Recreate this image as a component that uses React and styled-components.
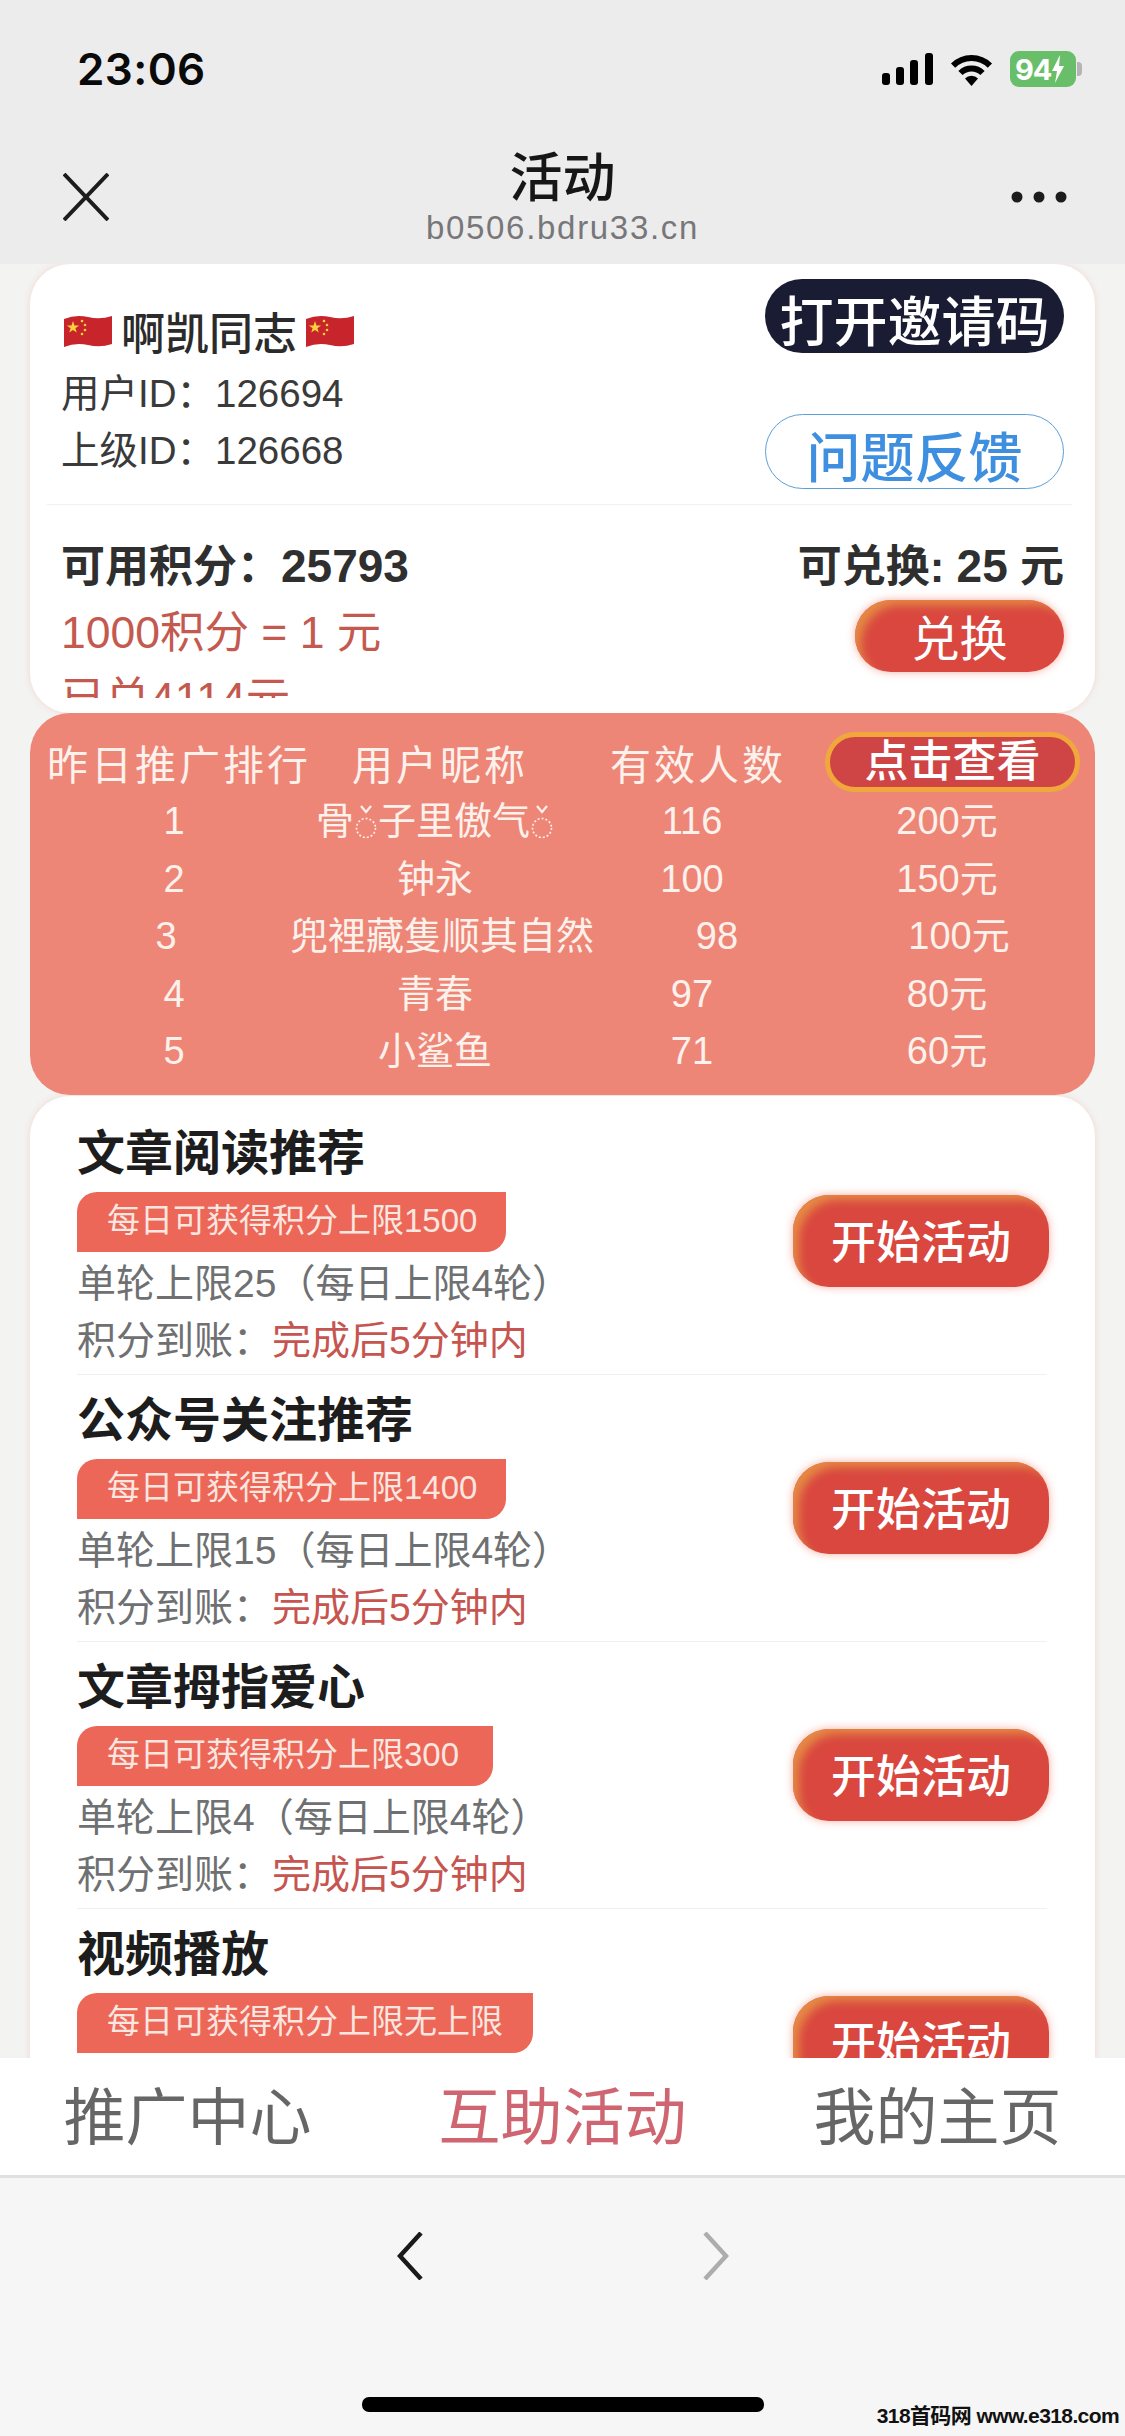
import React from 'react';
import styled, { createGlobalStyle } from 'styled-components';

const GlobalStyle = createGlobalStyle`
  html, body {
    margin: 0;
    padding: 0;
    background: #f3f3f1;
  }
  * {
    box-sizing: border-box;
  }
  body {
    font-family: "Liberation Sans", "Noto Sans CJK SC", sans-serif;
    text-spacing-trim: space-all;
  }
`;

const Page = styled.div`
  position: relative;
  width: 1125px;
  height: 2436px;
  display: flex;
  flex-direction: column;
  overflow: hidden;
  background: #f3f3f1;
`;

const Header = styled.header`
  height: 264px;
  flex-shrink: 0;
  background: #ececec;
`;

const StatusBar = styled.div`
  height: 138px;
  padding: 0 49px 0 77px;
  display: flex;
  align-items: center;
  justify-content: space-between;
`;

const Time = styled.span`
  font-family: Inter, sans-serif;
  font-size: 44px;
  font-weight: 600;
  letter-spacing: 0.4px;
  color: #0a0a0a;
`;

const StatusIcons = styled.div`
  display: flex;
  align-items: center;
  gap: 14px;
`;

const Battery = styled.div`
  position: relative;
  width: 66px;
  height: 36px;
  border-radius: 9px;
  background: #69bf69;
  display: flex;
  align-items: center;
  padding-left: 5px;
  font-family: Inter, sans-serif;
  font-size: 29px;
  font-weight: 700;
  letter-spacing: -1px;
  color: #fff;
  &::after {
    content: '';
    position: absolute;
    right: -6px;
    top: 11px;
    width: 5px;
    height: 14px;
    border-radius: 0 4px 4px 0;
    background: #b4b4b4;
  }
`;

const NavBar = styled.div`
  display: grid;
  grid-template-columns: 1fr auto 1fr;
  align-items: center;
  padding: 10px 58px 0;
`;

const NavLeft = styled.div`
  display: flex;
  padding-left: 5px;
`;

const NavRight = styled.div`
  justify-self: end;
  display: flex;
`;

const NavCenter = styled.div`
  display: flex;
  flex-direction: column;
  align-items: center;
`;

const NavTitle = styled.div`
  font-size: 53px;
  line-height: 62px;
  font-weight: 500;
  color: #161616;
`;

const NavDomain = styled.div`
  font-size: 33px;
  line-height: 36px;
  letter-spacing: 1.7px;
  color: #77777a;
`;

const Main = styled.main`
  flex: 1;
  min-height: 0;
  overflow: hidden;
  padding: 0 30px;
`;

const UserCard = styled.section`
  height: 449px;
  padding: 0 23px 0 17px;
  border-radius: 40px;
  background: #fff;
  box-shadow: 0 0 6px rgba(240, 160, 150, 0.35);
`;

const UserTop = styled.div`
  height: 241px;
  padding: 15px 8px 0 14px;
  display: flex;
  justify-content: space-between;
  border-bottom: 1px solid #f1f1f1;
`;

const UserInfo = styled.div`
  padding-top: 27px;
`;

const UserName = styled.div`
  height: 50px;
  margin: 0 0 9px 3px;
  display: flex;
  align-items: center;
  gap: 9px;
  font-size: 44px;
  font-weight: 500;
  color: #2b2b2b;
`;

const UserId = styled.div`
  font-size: 38.5px;
  line-height: 57px;
  color: #3a3a3a;
`;

const UserActions = styled.div`
  display: flex;
  flex-direction: column;
  gap: 61px;
`;

const PillButton = styled.button`
  width: 299px;
  height: ${(props) => (props.$outline ? '75px' : '74px')};
  padding: 0;
  border-radius: 38px;
  border: ${(props) => (props.$outline ? '1.5px solid #5a9fd8' : 'none')};
  background: ${(props) => (props.$outline ? '#fff' : '#1a1c33')};
  color: ${(props) => (props.$outline ? '#3f8fe0' : '#fff')};
  font-family: inherit;
  font-size: 54px;
  font-weight: 500;
`;

const UserBottom = styled.div`
  height: 193px;
  padding: 36px 8px 0 14px;
  overflow: hidden;
`;

const PointsRow = styled.div`
  display: flex;
  justify-content: space-between;
  font-size: 44px;
  line-height: 50px;
  font-weight: 700;
  color: #2f2f2f;
`;

const PointsValue = styled.b`
  font-size: 46px;
  font-weight: 700;
`;

const ExchangeRow = styled.div`
  display: flex;
  justify-content: space-between;
  align-items: flex-start;
  margin-top: 8px;
`;

const ExchangeText = styled.div`
  font-size: 44.5px;
  line-height: 66px;
  color: #c4594f;
`;

const GlowButton = styled.button`
  width: ${(props) => props.$width}px;
  height: ${(props) => props.$height}px;
  padding: 0 0 4px;
  border: none;
  border-radius: 36px;
  background: #d9473f;
  box-shadow: 0 0 8px rgba(240, 120, 100, 0.6), inset 9px 8px 10px -3px #e58a45;
  color: #fff;
  font-family: inherit;
  font-size: ${(props) => props.$size}px;
  font-weight: ${(props) => props.$weight || 400};
  flex-shrink: 0;
`;

const RankCard = styled.section`
  height: 382px;
  padding-top: 19px;
  border-radius: 40px;
  background: #ee8677;
  color: #fdf1ec;
`;

const RankHeader = styled.div`
  display: grid;
  grid-template-columns: 305px 258px 215px 255px;
  align-items: center;
  margin-bottom: 1px;
  padding-left: 17px;
  font-size: 41px;
  letter-spacing: 3px;
`;

const ViewButton = styled.button`
  height: 60px;
  padding: 0;
  border: 5px solid #f0a83c;
  border-radius: 30px;
  background: #cf4444;
  color: #fff;
  font-family: inherit;
  font-size: 44px;
  line-height: 46px;
  font-weight: 500;
`;

const RankRow = styled.div`
  display: grid;
  grid-template-columns: ${(props) => props.$columns};
  height: 57.5px;
  padding-left: 32px;
  font-size: 38px;
  line-height: 57.5px;
  text-align: center;
`;

const RingIcon = styled.svg`
  width: 24px;
  height: 36px;
  vertical-align: -7px;
`;

const TaskCard = styled.section`
  margin-top: 1px;
  padding: 12px 48px 0 47px;
  border-radius: 40px 40px 0 0;
  background: #fff;
  box-shadow: 0 0 6px rgba(240, 160, 150, 0.35);
`;

const Task = styled.article`
  display: flex;
  justify-content: space-between;
  align-items: flex-start;
  padding: 16px 0 5px;
  border-bottom: 1px solid #f0f0f0;
`;

const TaskTitle = styled.h2`
  margin: 0 0 8px;
  font-size: 48px;
  line-height: 60px;
  font-weight: 700;
  color: #1d1d1d;
`;

const TaskTag = styled.div`
  width: ${(props) => props.$width}px;
  height: 60px;
  margin-bottom: 3px;
  padding-left: 30px;
  border-radius: 20px 0 20px 0;
  background: #ec6757;
  color: #fbe6e0;
  font-size: 33px;
  line-height: 58px;
`;

const TaskLine = styled.div`
  font-size: 39px;
  line-height: 57px;
  white-space: nowrap;
  color: #6e7072;
`;

const TaskAccent = styled.span`
  color: #c65550;
`;

const TaskAction = styled.div`
  margin: 71px -2px 0 0;
`;

const TabBar = styled.nav`
  height: 120px;
  flex-shrink: 0;
  display: flex;
  background: #fff;
  border-bottom: 3px solid #e0e0e0;
  position: relative;
`;

const Tab = styled.div`
  flex: 1;
  text-align: center;
  padding-top: 5px;
  font-size: 62px;
  line-height: 112px;
  color: ${(props) => (props.$active ? '#cf6570' : '#666')};
`;

const BrowserBar = styled.div`
  height: 258px;
  flex-shrink: 0;
  padding-top: 54px;
  display: flex;
  flex-direction: column;
  align-items: center;
  background: #f6f6f6;
`;

const BrowserButtons = styled.div`
  display: flex;
  gap: 278px;
`;

const HomeIndicator = styled.div`
  width: 402px;
  height: 15px;
  margin-top: 117px;
  border-radius: 7px;
  background: #000;
`;

const Watermark = styled.div`
  position: absolute;
  right: 6px;
  bottom: 8px;
  font-size: 21px;
  line-height: 24px;
  font-weight: 700;
  letter-spacing: -0.6px;
  color: #111;
`;

function Flag() {
  return (
    <svg width="48" height="35" viewBox="0 0 48 35">
      <path d="M0 5 Q12 0 24 3 T48 2 V30 Q36 34 24 31 T0 33 Z" fill="#c8242c" />
      <path d="M9 7l1.5 4.4h4.6l-3.7 2.8 1.4 4.4-3.8-2.7-3.8 2.7 1.4-4.4-3.7-2.8h4.6z" fill="#f6d33c" />
      <circle cx="18" cy="7" r="1.3" fill="#f6d33c" />
      <circle cx="21" cy="11" r="1.3" fill="#f6d33c" />
      <circle cx="21" cy="16" r="1.3" fill="#f6d33c" />
      <circle cx="18" cy="20" r="1.3" fill="#f6d33c" />
    </svg>
  );
}

function Ring() {
  return (
    <RingIcon viewBox="0 0 24 36" fill="none" stroke="#fdf1ec">
      <path d="M7 1 L12 7 L17 1" strokeWidth="2.2" />
      <circle cx="12" cy="23" r="9.5" strokeWidth="1.6" strokeDasharray="2 2" />
    </RingIcon>
  );
}

function SignalIcon() {
  return (
    <svg width="51" height="32" viewBox="0 0 51 32" fill="#000">
      <rect x="0" y="20" width="8" height="12" rx="3" />
      <rect x="14" y="14" width="8" height="18" rx="3" />
      <rect x="28" y="7" width="8" height="25" rx="3" />
      <rect x="43" y="0" width="8" height="32" rx="3" />
    </svg>
  );
}

function WifiIcon() {
  return (
    <svg width="49" height="33" viewBox="0 0 49 33">
      <path d="M6.1 12.6 A26 26 0 0 1 42.9 12.6" fill="none" stroke="#000" strokeWidth="6" />
      <path d="M13.5 20 A15.5 15.5 0 0 1 35.5 20" fill="none" stroke="#000" strokeWidth="6" />
      <path d="M24.5 33 L18 25.5 A9 9 0 0 1 31 25.5 Z" fill="#000" />
    </svg>
  );
}

function BoltIcon() {
  return (
    <svg width="14" height="28" viewBox="0 0 14 28" fill="#fff">
      <path d="M9 0 L1 16 H6 L4 28 L13 11 H8 Z" />
    </svg>
  );
}

function CloseIcon() {
  return (
    <svg width="46" height="48" viewBox="0 0 46 48" stroke="#1c1c1c" strokeWidth="4" fill="none">
      <path d="M1 1 L45 47 M45 1 L1 47" />
    </svg>
  );
}

function DotsIcon() {
  return (
    <svg width="56" height="12" viewBox="0 0 56 12" fill="#1c1c1c">
      <circle cx="6" cy="6" r="5.5" />
      <circle cx="28" cy="6" r="5.5" />
      <circle cx="50" cy="6" r="5.5" />
    </svg>
  );
}

function Chevron({ direction, color }) {
  const d = direction === 'left' ? 'M24 1 L3 24 L24 47' : 'M3 1 L24 24 L3 47';
  return (
    <svg width="27" height="48" viewBox="0 0 27 48" fill="none" stroke={color} strokeWidth="4.5">
      <path d={d} />
    </svg>
  );
}

const NORMAL_COLUMNS = '224px 298px 216px 294px';
const SHIFTED_COLUMNS = '208px 344px 206px 278px';

const ranks = [
  {
    id: 1,
    name: (
      <>
        骨<Ring />子里傲气<Ring />
      </>
    ),
    count: 116,
    reward: '200元',
  },
  { id: 2, name: '钟永', count: 100, reward: '150元' },
  { id: 3, name: '兜裡藏隻顺其自然', count: 98, reward: '100元', columns: SHIFTED_COLUMNS },
  { id: 4, name: '青春', count: 97, reward: '80元' },
  { id: 5, name: '小鲨鱼', count: 71, reward: '60元' },
];

const tasks = [
  { title: '文章阅读推荐', tag: '每日可获得积分上限1500', tagWidth: 429, limit: '单轮上限25（每日上限4轮）' },
  { title: '公众号关注推荐', tag: '每日可获得积分上限1400', tagWidth: 429, limit: '单轮上限15（每日上限4轮）' },
  { title: '文章拇指爱心', tag: '每日可获得积分上限300', tagWidth: 416, limit: '单轮上限4（每日上限4轮）' },
  { title: '视频播放', tag: '每日可获得积分上限无上限', tagWidth: 456 },
];

export default function App() {
  return (
    <Page>
      <GlobalStyle />
      <Header>
        <StatusBar>
          <Time>23:06</Time>
          <StatusIcons>
            <SignalIcon />
            <WifiIcon />
            <Battery>
              94
              <BoltIcon />
            </Battery>
          </StatusIcons>
        </StatusBar>
        <NavBar>
          <NavLeft>
            <CloseIcon />
          </NavLeft>
          <NavCenter>
            <NavTitle>活动</NavTitle>
            <NavDomain>b0506.bdru33.cn</NavDomain>
          </NavCenter>
          <NavRight>
            <DotsIcon />
          </NavRight>
        </NavBar>
      </Header>

      <Main>
        <UserCard>
          <UserTop>
            <UserInfo>
              <UserName>
                <Flag />
                啊凯同志
                <Flag />
              </UserName>
              <UserId>用户ID：126694</UserId>
              <UserId>上级ID：126668</UserId>
            </UserInfo>
            <UserActions>
              <PillButton>打开邀请码</PillButton>
              <PillButton $outline>问题反馈</PillButton>
            </UserActions>
          </UserTop>
          <UserBottom>
            <PointsRow>
              <span>
                可用积分：<PointsValue>25793</PointsValue>
              </span>
              <span>
                可兑换: <PointsValue>25</PointsValue> 元
              </span>
            </PointsRow>
            <ExchangeRow>
              <div>
                <ExchangeText>1000积分 = 1 元</ExchangeText>
                <ExchangeText>已兑4114元</ExchangeText>
              </div>
              <GlowButton $width={209} $height={72} $size={48}>
                兑换
              </GlowButton>
            </ExchangeRow>
          </UserBottom>
        </UserCard>

        <RankCard>
          <RankHeader>
            <span>昨日推广排行</span>
            <span>用户昵称</span>
            <span>有效人数</span>
            <ViewButton>点击查看</ViewButton>
          </RankHeader>
          {ranks.map((rank) => (
            <RankRow key={rank.id} $columns={rank.columns || NORMAL_COLUMNS}>
              <span>{rank.id}</span>
              <span>{rank.name}</span>
              <span>{rank.count}</span>
              <span>{rank.reward}</span>
            </RankRow>
          ))}
        </RankCard>

        <TaskCard>
          {tasks.map((task) => (
            <Task key={task.title}>
              <div>
                <TaskTitle>{task.title}</TaskTitle>
                <TaskTag $width={task.tagWidth}>{task.tag}</TaskTag>
                {task.limit && (
                  <>
                    <TaskLine>{task.limit}</TaskLine>
                    <TaskLine>
                      积分到账：<TaskAccent>完成后5分钟内</TaskAccent>
                    </TaskLine>
                  </>
                )}
              </div>
              <TaskAction>
                <GlowButton $width={256} $height={92} $size={45} $weight={500}>
                  开始活动
                </GlowButton>
              </TaskAction>
            </Task>
          ))}
        </TaskCard>
      </Main>

      <TabBar>
        <Tab>推广中心</Tab>
        <Tab $active>互助活动</Tab>
        <Tab>我的主页</Tab>
      </TabBar>

      <BrowserBar>
        <BrowserButtons>
          <Chevron direction="left" color="#1a1a1a" />
          <Chevron direction="right" color="#adadad" />
        </BrowserButtons>
        <HomeIndicator />
      </BrowserBar>

      <Watermark>318首码网 www.e318.com</Watermark>
    </Page>
  );
}
